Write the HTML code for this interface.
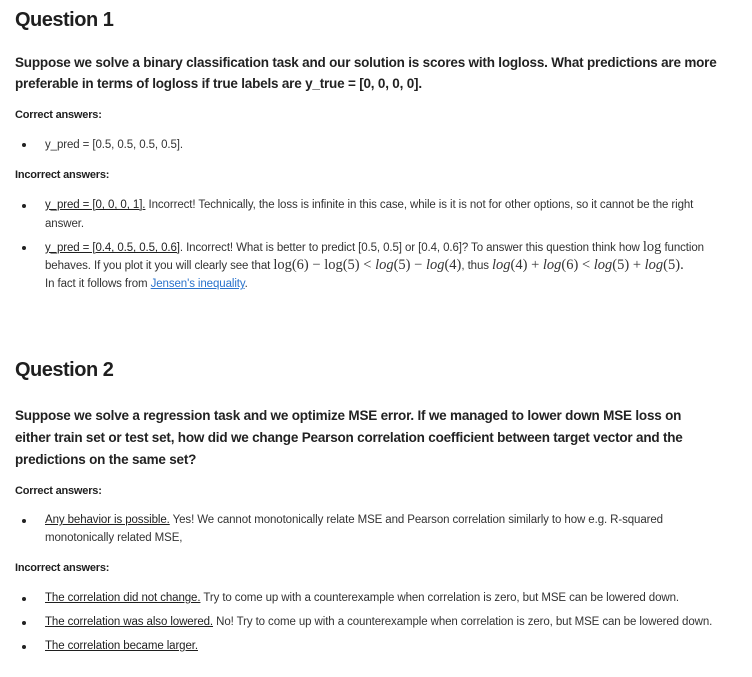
<!DOCTYPE html>
<html><head><meta charset="utf-8"><style>
html,body{margin:0;padding:0;background:#fff;}
body{width:752px;height:677px;position:relative;overflow:hidden;font-family:"Liberation Sans",sans-serif;color:#1f1f1f;}
.l{position:absolute;white-space:nowrap;line-height:18px;}
h{position:absolute;font-size:20px;font-weight:bold;color:#1f1f1f;line-height:24px;letter-spacing:-0.5px;white-space:nowrap;}
.q{font-size:13.5px;font-weight:bold;letter-spacing:-0.2px;color:#222;}
.lab{font-size:11px;font-weight:bold;color:#1f1f1f;letter-spacing:-0.2px;}
.t{font-size:11.5px;color:#333;letter-spacing:-0.1px;left:45px;}
.b{position:absolute;left:22px;width:4px;height:4px;border-radius:50%;background:#222;}
u{text-decoration:underline;color:#1f1f1f;}
.m{font-family:"Liberation Serif",serif;font-size:14.5px;letter-spacing:0;}
a{color:#2a73cc;text-decoration:underline;}
</style></head><body>
<h style="left:15px;top:8px">Question 1</h>
<div class="l q" style="left:15px;top:54px">Suppose we solve a binary classification task and our solution is scores with logloss. What predictions are more</div>
<div class="l q" style="left:15px;top:75px">preferable in terms of logloss if true labels are y_true = [0, 0, 0, 0].</div>
<div class="l lab" style="left:15px;top:106px">Correct answers:</div>
<div class="b" style="top:143px"></div>
<div class="l t" style="top:136px">y_pred = [0.5, 0.5, 0.5, 0.5].</div>
<div class="l lab" style="left:15px;top:166px">Incorrect answers:</div>
<div class="b" style="top:204px"></div>
<div class="l t" style="top:196px"><u>y_pred = [0, 0, 0, 1].</u> Incorrect! Technically, the loss is infinite in this case, while is it is not for other options, so it cannot be the right</div>
<div class="l t" style="top:215px">answer.</div>
<div class="b" style="top:246px"></div>
<div class="l t" style="top:238px"><u>y_pred = [0.4, 0.5, 0.5, 0.6]</u>. Incorrect! What is better to predict [0.5, 0.5] or [0.4, 0.6]? To answer this question think how <span class="m">log</span> function</div>
<div class="l t" style="top:256px">behaves. If you plot it you will clearly see that <span class="m">log(6) − log(5) &lt; <i>log</i>(5) − <i>log</i>(4)</span>, thus <span class="m"><i>log</i>(4) + <i>log</i>(6) &lt; <i>log</i>(5) + <i>log</i>(5).</span></div>
<div class="l t" style="top:275px">In fact it follows from <a>Jensen's inequality</a>.</div>

<h style="left:15px;top:358px">Question 2</h>
<div class="l q" style="left:15px;top:407px">Suppose we solve a regression task and we optimize MSE error. If we managed to lower down MSE loss on</div>
<div class="l q" style="left:15px;top:429px">either train set or test set, how did we change Pearson correlation coefficient between target vector and the</div>
<div class="l q" style="left:15px;top:451px">predictions on the same set?</div>
<div class="l lab" style="left:15px;top:482px">Correct answers:</div>
<div class="b" style="top:519px"></div>
<div class="l t" style="top:511px"><u>Any behavior is possible.</u> Yes! We cannot monotonically relate MSE and Pearson correlation similarly to how e.g. R-squared</div>
<div class="l t" style="top:529px">monotonically related MSE,</div>
<div class="l lab" style="left:15px;top:559px">Incorrect answers:</div>
<div class="b" style="top:597px"></div>
<div class="l t" style="top:589px"><u>The correlation did not change.</u> Try to come up with a counterexample when correlation is zero, but MSE can be lowered down.</div>
<div class="b" style="top:621px"></div>
<div class="l t" style="top:613px"><u>The correlation was also lowered.</u> No! Try to come up with a counterexample when correlation is zero, but MSE can be lowered down.</div>
<div class="b" style="top:645px"></div>
<div class="l t" style="top:637px"><u>The correlation became larger.</u></div>
</body></html>
